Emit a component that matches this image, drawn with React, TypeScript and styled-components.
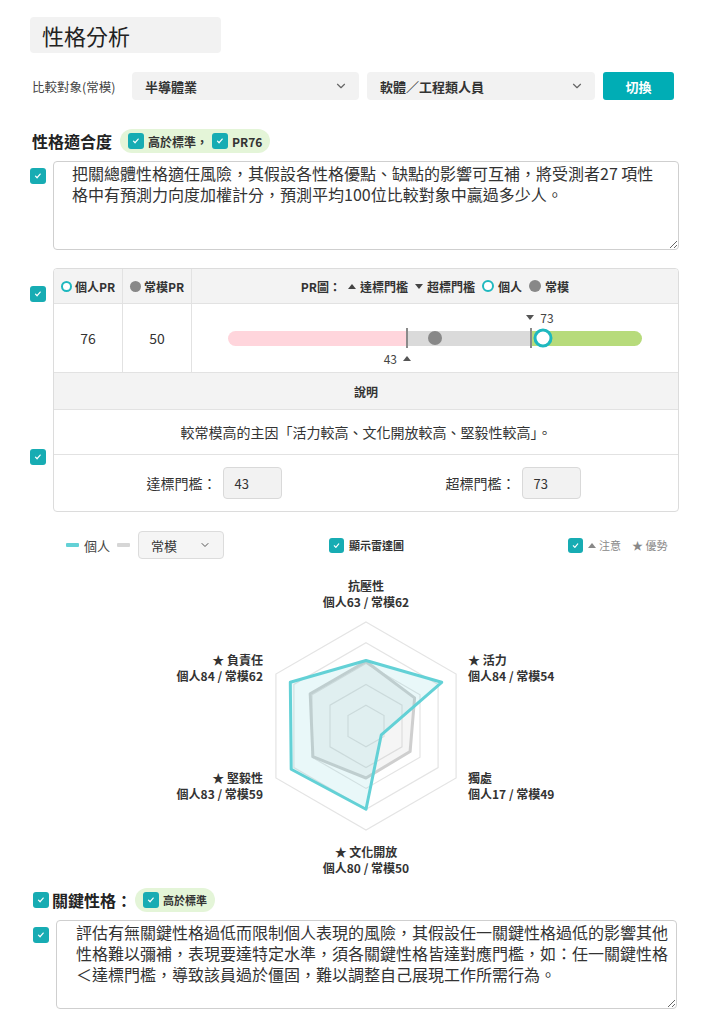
import React from "react";
import styled, { createGlobalStyle } from "styled-components";
import { ChevronDown } from "lucide-react";

const TEAL = "#17acb3";
const FONT = `"Noto Sans CJK TC", "Noto Sans", sans-serif`;

const GlobalStyle = createGlobalStyle`
  html, body { margin: 0; padding: 0; background: #fff; }
  body { font-family: ${FONT}; color: #333; }
  * { box-sizing: border-box; }
`;

const Page = styled.div`
  width: 711px;
  padding: 17px 0 20px 30px;
`;

const TitleBox = styled.div`
  width: 191px;
  height: 36px;
  background: #f2f2f2;
  border-radius: 4px;
  display: flex;
  align-items: center;
  padding-left: 12px;
  font-size: 22px;
  color: #222;
`;

const SelectRow = styled.div`
  display: flex;
  align-items: center;
  margin-top: 19px;
  padding-left: 2px;
  gap: 8px;
`;

const FieldLabel = styled.span`
  font-size: 12.5px;
  color: #444;
  width: 92px;
`;

const FakeSelect = styled.div<{ $w: number }>`
  width: ${(p) => p.$w}px;
  height: 28px;
  background: #f2f2f2;
  border-radius: 4px;
  display: flex;
  align-items: center;
  justify-content: space-between;
  padding: 0 11px 0 13px;
  font-size: 13px;
  font-weight: 700;
  color: #333;
  svg { color: #666; }
`;

const Button = styled.button`
  width: 71px;
  height: 28px;
  background: #00adb5;
  color: #fff;
  border: none;
  border-radius: 3px;
  font-family: ${FONT};
  font-size: 13px;
  font-weight: 700;
`;

const HeadingRow = styled.div<{ $mt: number; $pl: number; $gap: number }>`
  display: flex;
  align-items: center;
  margin-top: ${(p) => p.$mt}px;
  padding-left: ${(p) => p.$pl}px;
  gap: ${(p) => p.$gap}px;
  height: 24px;
`;

const Heading = styled.span`
  font-size: 16px;
  font-weight: 700;
  color: #222;
`;

const Badge = styled.div`
  display: flex;
  align-items: center;
  height: 24px;
  padding: 0 8px;
  border-radius: 12px;
  background: #e4f5d8;
  gap: 4px;
`;

const BadgeText = styled.span<{ $size: number }>`
  font-size: ${(p) => p.$size}px;
  font-weight: 700;
  color: #333;
`;

const Box = styled.span<{ $size: number }>`
  flex: none;
  width: ${(p) => p.$size}px;
  height: ${(p) => p.$size}px;
  border-radius: 3px;
  background: ${TEAL};
  display: inline-flex;
  align-items: center;
  justify-content: center;
`;

const Check = ({ size = 16 }: { size?: number }) => (
  <Box $size={size}>
    <svg width={size * 0.6} height={size * 0.6} viewBox="0 0 10 10">
      <path d="M2.6 5.3 L4.3 7 L7.5 3.2" fill="none" stroke="#fff" strokeWidth="1.3" strokeLinecap="round" strokeLinejoin="round" />
    </svg>
  </Box>
);

const CheckRow = styled.div<{ $mt: number; $pl: number }>`
  display: flex;
  align-items: flex-start;
  gap: 7px;
  margin-top: ${(p) => p.$mt}px;
  padding-left: ${(p) => p.$pl}px;
`;

const CheckCol = styled.div`
  display: flex;
  flex-direction: column;
  width: 16px;
`;

const CheckSlot = styled.div<{ $mt: number }>`
  margin-top: ${(p) => p.$mt}px;
  height: 16px;
`;

const TextArea = styled.textarea<{ $w: number; $pl: number; $pr: number }>`
  width: ${(p) => p.$w}px;
  height: 89px;
  border: 1px solid #cfcfcf;
  border-radius: 4px;
  padding: 1px ${(p) => p.$pr}px 2px ${(p) => p.$pl}px;
  font-family: ${FONT};
  font-size: 16px;
  line-height: 21px;
  color: #333;
  background: #fff;
  outline: none;
`;

const Table = styled.div`
  width: 626px;
  border: 1px solid #dcdcdc;
  border-radius: 4px;
  overflow: hidden;
`;

const PRGrid = styled.div`
  display: grid;
  grid-template-columns: 69px 69px 1fr;
`;

const Cell = styled.div<{ $h: number; $head?: boolean; $last?: boolean }>`
  height: ${(p) => p.$h}px;
  display: flex;
  align-items: center;
  justify-content: center;
  gap: 3px;
  background: ${(p) => (p.$head ? "#f3f3f3" : "#fff")};
  border-right: ${(p) => (p.$last ? "none" : "1px solid #e2e2e2")};
  border-bottom: 1px solid #e2e2e2;
  font-size: ${(p) => (p.$head ? 12 : 14)}px;
  font-weight: ${(p) => (p.$head ? 700 : 400)};
  color: #333;
  white-space: nowrap;
`;

const Ring = styled.span<{ $size: number; $bw: number }>`
  display: inline-block;
  width: ${(p) => p.$size}px;
  height: ${(p) => p.$size}px;
  border-radius: 50%;
  border: ${(p) => p.$bw}px solid #1fb8bf;
  background: #fff;
`;

const Dot = styled.span<{ $size: number }>`
  display: inline-block;
  width: ${(p) => p.$size}px;
  height: ${(p) => p.$size}px;
  border-radius: 50%;
  background: #888;
`;

const Tri = styled.span<{ $down?: boolean; $color?: string }>`
  display: inline-block;
  width: 0;
  height: 0;
  border-left: 4.5px solid transparent;
  border-right: 4.5px solid transparent;
  ${(p) =>
    p.$down
      ? `border-top: 5px solid ${p.$color || "#444"};`
      : `border-bottom: 5px solid ${p.$color || "#444"};`}
`;

const Legend = styled.span`
  display: inline-flex;
  align-items: center;
  gap: 4px;
  margin-left: 4px;
`;

const BarCell = styled.div`
  height: 69px;
  padding: 0 36px;
  display: flex;
  align-items: center;
  border-bottom: 1px solid #e2e2e2;
`;

const Bar = styled.div`
  position: relative;
  width: 100%;
  height: 15px;
  display: flex;
`;

const Seg = styled.div<{ $w: number; $c: string; $l?: boolean; $r?: boolean }>`
  width: ${(p) => p.$w}%;
  height: 100%;
  background: ${(p) => p.$c};
  border-radius: ${(p) => (p.$l ? "8px 0 0 8px" : p.$r ? "0 8px 8px 0" : "0")};
`;

const Tick = styled.div`
  position: absolute;
  top: -3px;
  width: 1.5px;
  height: 20px;
  background: #8a8a8a;
`;

const Marker = styled.div`
  position: absolute;
  top: 50%;
  transform: translate(-50%, -50%);
  display: flex;
`;

const BarLabel = styled.div<{ $top: number }>`
  position: absolute;
  top: ${(p) => p.$top}px;
  display: flex;
  align-items: center;
  gap: 6px;
  font-size: 12px;
  color: #444;
  line-height: 14px;
`;

const DescHead = styled.div`
  height: 37px;
  display: flex;
  align-items: center;
  justify-content: center;
  background: #f3f3f3;
  border-bottom: 1px solid #e2e2e2;
  font-size: 12px;
  font-weight: 700;
`;

const DescText = styled.div`
  height: 45px;
  display: flex;
  align-items: center;
  justify-content: center;
  border-bottom: 1px solid #e2e2e2;
  font-size: 14px;
  color: #333;
`;

const ThreshRow = styled.div`
  height: 56px;
  display: grid;
  grid-template-columns: 1fr 1fr;
`;

const ThreshGroup = styled.div<{ $shift: number }>`
  display: flex;
  align-items: center;
  justify-content: center;
  gap: 6px;
  font-size: 14px;
  color: #333;
  transform: translateX(${(p) => p.$shift}px);
`;

const ValueBox = styled.div`
  width: 59px;
  height: 32px;
  background: #f2f2f2;
  border: 1px solid #d9d9d9;
  border-radius: 4px;
  display: flex;
  align-items: center;
  padding-left: 11px;
  font-size: 13px;
  color: #333;
`;

const LegendRow = styled.div`
  display: grid;
  grid-template-columns: 299px 239px 1fr;
  align-items: center;
  margin-top: 19px;
  height: 28px;
`;

const LegendGroup = styled.div<{ $pl?: number }>`
  display: flex;
  align-items: center;
  padding-left: ${(p) => p.$pl || 0}px;
  gap: 5px;
`;

const Line = styled.span<{ $c: string }>`
  display: inline-block;
  width: 13px;
  height: 4px;
  border-radius: 1px;
  background: ${(p) => p.$c};
`;

const LegendText = styled.span`
  font-size: 13px;
  color: #444;
  margin-right: 2px;
`;

const SmallSelect = styled.div`
  width: 86px;
  height: 28px;
  margin-left: 3px;
  background: #f5f5f5;
  border: 1px solid #dcdcdc;
  border-radius: 4px;
  display: flex;
  align-items: center;
  justify-content: space-between;
  padding: 0 12px;
  font-size: 13px;
  color: #333;
  svg { color: #555; }
`;

const TinyText = styled.span<{ $bold?: boolean; $gray?: boolean }>`
  font-size: 11px;
  font-weight: ${(p) => (p.$bold ? 700 : 400)};
  color: ${(p) => (p.$gray ? "#888" : "#333")};
  display: inline-flex;
  align-items: center;
  gap: 3px;
`;

const RadarWrap = styled.div`
  margin-top: 6px;
  height: 315px;
`;

const axes = [
  { name: "抗壓性", star: false, p: 63, n: 62 },
  { name: "活力", star: true, p: 84, n: 54 },
  { name: "獨處", star: false, p: 17, n: 49 },
  { name: "文化開放", star: true, p: 80, n: 50 },
  { name: "堅毅性", star: true, p: 83, n: 59 },
  { name: "負責任", star: true, p: 84, n: 62 },
];

const labelPos: { x: number; y: number; anchor: "start" | "middle" | "end" }[] = [
  { x: 336, y: 25.5, anchor: "middle" },
  { x: 438, y: 99.5, anchor: "start" },
  { x: 438, y: 217.5, anchor: "start" },
  { x: 336, y: 291.5, anchor: "middle" },
  { x: 233, y: 217.5, anchor: "end" },
  { x: 233, y: 99.5, anchor: "end" },
];

const CX = 336;
const CY = 161;
const R = 104;

const pt = (i: number, r: number) => {
  const a = ((-90 + 60 * i) * Math.PI) / 180;
  return [CX + r * Math.cos(a), CY + r * Math.sin(a)];
};

const poly = (vals: number[]) =>
  vals.map((v, i) => pt(i, (R * v) / 100).map((n) => n.toFixed(1)).join(",")).join(" ");

const Radar = () => (
  <svg width="681" height="315" viewBox="0 0 681 315">
    {[100, 80, 60, 40, 20].map((lv) => (
      <polygon
        key={lv}
        points={poly([lv, lv, lv, lv, lv, lv])}
        fill={lv === 100 ? "#fff" : "none"}
        stroke="#e4e4e4"
        strokeWidth="1.2"
      />
    ))}
    <polygon
      points={poly(axes.map((a) => a.n))}
      fill="rgba(170,170,170,0.12)"
      stroke="#cfcfcf"
      strokeWidth="3"
      strokeLinejoin="round"
    />
    <polygon
      points={poly(axes.map((a) => a.p))}
      fill="rgba(98,206,212,0.14)"
      stroke="#63d1d6"
      strokeWidth="3"
      strokeLinejoin="round"
    />
    {axes.map((a, i) => {
      const l = labelPos[i];
      return (
        <text
          key={a.name}
          x={l.x}
          textAnchor={l.anchor}
          fontFamily={FONT}
          fontSize="12"
          fontWeight="700"
          fill="#333"
        >
          <tspan x={l.x} y={l.y}>
            {a.star ? "★ " : ""}
            {a.name}
          </tspan>
          <tspan x={l.x} y={l.y + 16}>
            {`個人${a.p} / 常模${a.n}`}
          </tspan>
        </text>
      );
    })}
  </svg>
);

export default function App() {
  return (
    <>
      <GlobalStyle />
      <Page>
        <TitleBox>性格分析</TitleBox>

        <SelectRow>
          <FieldLabel>比較對象(常模)</FieldLabel>
          <FakeSelect $w={227}>
            半導體業
            <ChevronDown size={14} />
          </FakeSelect>
          <FakeSelect $w={228}>
            軟體／工程類人員
            <ChevronDown size={14} />
          </FakeSelect>
          <Button>切換</Button>
        </SelectRow>

        <HeadingRow $mt={29} $pl={2} $gap={8}>
          <Heading>性格適合度</Heading>
          <Badge>
            <Check />
            <BadgeText $size={12}>高於標準，</BadgeText>
            <Check />
            <BadgeText $size={12}>PR76</BadgeText>
          </Badge>
        </HeadingRow>

        <CheckRow $mt={8} $pl={0}>
          <CheckCol>
            <CheckSlot $mt={1}>
              <Check />
            </CheckSlot>
          </CheckCol>
          <TextArea
            $w={626}
            $pl={18}
            $pr={11}
            readOnly
            value="把關總體性格適任風險，其假設各性格優點、缺點的影響可互補，將受測者27 項性格中有預測力向度加權計分，預測平均100位比較對象中贏過多少人。"
          />
        </CheckRow>

        <CheckRow $mt={18} $pl={0}>
          <CheckCol>
            <CheckSlot $mt={12}>
              <Check />
            </CheckSlot>
            <CheckSlot $mt={147}>
              <Check />
            </CheckSlot>
          </CheckCol>
          <Table>
            <PRGrid>
              <Cell $h={35} $head>
                <Ring $size={11} $bw={2} />
                個人PR
              </Cell>
              <Cell $h={35} $head>
                <Dot $size={11} />
                常模PR
              </Cell>
              <Cell $h={35} $head $last>
                PR圖：
                <Legend>
                  <Tri />
                  達標門檻
                </Legend>
                <Legend>
                  <Tri $down />
                  超標門檻
                </Legend>
                <Legend>
                  <Ring $size={12} $bw={2} />
                  個人
                </Legend>
                <Legend>
                  <Dot $size={12} />
                  常模
                </Legend>
              </Cell>
              <Cell $h={69}>76</Cell>
              <Cell $h={69}>50</Cell>
              <BarCell>
                <Bar>
                  <Seg $w={43} $c="#ffd5dc" $l />
                  <Seg $w={30} $c="#dadada" />
                  <Seg $w={27} $c="#b7db7b" $r />
                  <Tick style={{ left: "43%" }} />
                  <Tick style={{ left: "73%" }} />
                  <Marker style={{ left: "50%" }}>
                    <Dot $size={14} />
                  </Marker>
                  <Marker style={{ left: "76%" }}>
                    <Ring $size={19} $bw={3} />
                  </Marker>
                  <BarLabel $top={-20} style={{ left: "calc(73% - 4px)" }}>
                    <Tri $down $color="#555" />
                    73
                  </BarLabel>
                  <BarLabel $top={21} style={{ right: "calc(57% - 5px)" }}>
                    43
                    <Tri $color="#555" />
                  </BarLabel>
                </Bar>
              </BarCell>
            </PRGrid>
            <DescHead>說明</DescHead>
            <DescText>較常模高的主因「活力較高、文化開放較高、堅毅性較高」。</DescText>
            <ThreshRow>
              <ThreshGroup $shift={4}>
                達標門檻：
                <ValueBox>43</ValueBox>
              </ThreshGroup>
              <ThreshGroup $shift={-9}>
                超標門檻：
                <ValueBox>73</ValueBox>
              </ThreshGroup>
            </ThreshRow>
          </Table>
        </CheckRow>

        <LegendRow>
          <LegendGroup $pl={36}>
            <Line $c="#63d1d6" />
            <LegendText>個人</LegendText>
            <Line $c="#d6d6d6" />
            <SmallSelect>
              常模
              <ChevronDown size={12} />
            </SmallSelect>
          </LegendGroup>
          <LegendGroup>
            <Check size={15} />
            <TinyText $bold>顯示雷達圖</TinyText>
          </LegendGroup>
          <LegendGroup>
            <Check size={15} />
            <TinyText $gray>
              <Tri $color="#888" />
              注意
            </TinyText>
            <TinyText $gray style={{ marginLeft: 6 }}>★ 優勢</TinyText>
          </LegendGroup>
        </LegendRow>

        <RadarWrap>
          <Radar />
        </RadarWrap>

        <HeadingRow $mt={8} $pl={3} $gap={3}>
          <Check />
          <Heading>關鍵性格：</Heading>
          <Badge>
            <Check />
            <BadgeText $size={11}>高於標準</BadgeText>
          </Badge>
        </HeadingRow>

        <CheckRow $mt={8} $pl={3}>
          <CheckCol>
            <CheckSlot $mt={1}>
              <Check />
            </CheckSlot>
          </CheckCol>
          <TextArea
            $w={621}
            $pl={19}
            $pr={5}
            readOnly
            value="評估有無關鍵性格過低而限制個人表現的風險，其假設任一關鍵性格過低的影響其他性格難以彌補，表現要達特定水準，須各關鍵性格皆達對應門檻，如：任一關鍵性格＜達標門檻，導致該員過於僵固，難以調整自己展現工作所需行為。"
          />
        </CheckRow>
      </Page>
    </>
  );
}
